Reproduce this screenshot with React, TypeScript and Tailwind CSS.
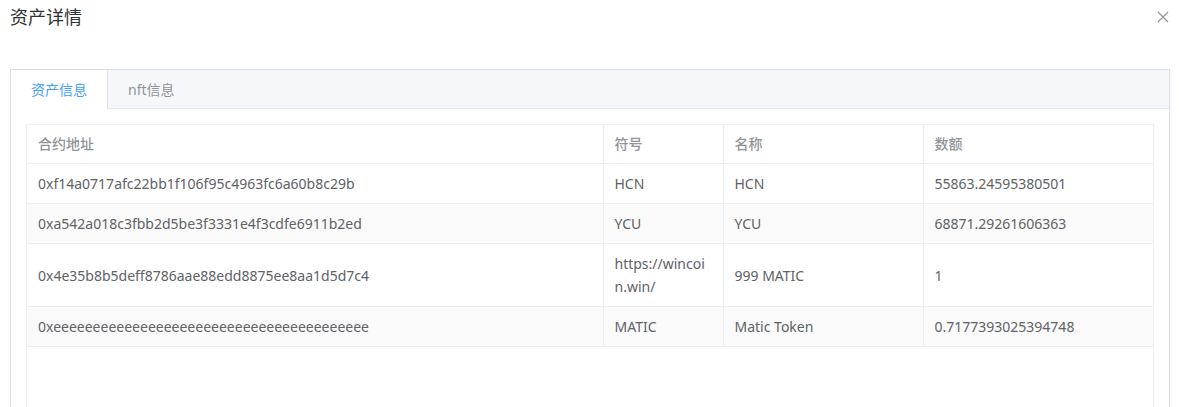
import { useState } from "react";

const rows = [
  {
    address: "0xf14a0717afc22bb1f106f95c4963fc6a60b8c29b",
    symbol: "HCN",
    name: "HCN",
    amount: "55863.24595380501",
  },
  {
    address: "0xa542a018c3fbb2d5be3f3331e4f3cdfe6911b2ed",
    symbol: "YCU",
    name: "YCU",
    amount: "68871.29261606363",
  },
  {
    address: "0x4e35b8b5deff8786aae88edd8875ee8aa1d5d7c4",
    symbol: "https://wincoin.win/",
    name: "999 MATIC",
    amount: "1",
  },
  {
    address: "0xeeeeeeeeeeeeeeeeeeeeeeeeeeeeeeeeeeeeeeee",
    symbol: "MATIC",
    name: "Matic Token",
    amount: "0.7177393025394748",
  },
];

const cols = [
  { key: "address", label: "合约地址", width: "w-[576px]" },
  { key: "symbol", label: "符号", width: "w-[120px]" },
  { key: "name", label: "名称", width: "w-[200px]" },
  { key: "amount", label: "数额", width: "w-[230px]" },
];

const CloseIcon = () => (
  <svg width="12" height="12" viewBox="0 0 12 12" fill="none">
    <path d="M1 1L11 11M11 1L1 11" stroke="#909399" strokeWidth="1.1" />
  </svg>
);

const AssetTable = () => (
  <div className="h-[300px] border border-[#ebeef5] bg-white">
    <table className="table-fixed border-collapse w-[1126px]">
      <colgroup>
        {cols.map((c) => (
          <col key={c.key} className={c.width} />
        ))}
      </colgroup>
      <thead>
        <tr>
          {cols.map((c, i) => (
            <th
              key={c.key}
              className={`text-left font-medium text-[#909399] text-[14px] leading-[23px] pt-[7px] pb-2 px-[11px] border-b border-[#ebeef5] ${
                i < cols.length - 1 ? "border-r" : ""
              }`}
            >
              {c.label}
            </th>
          ))}
        </tr>
      </thead>
      <tbody>
        {rows.map((row: any, r) => (
          <tr key={row.address} className={r % 2 === 1 ? "bg-[#fafafa]" : "bg-white"}>
            {cols.map((c, i) => (
              <td
                key={c.key}
                className={`text-[#606266] text-[14px] leading-[23px] py-2 px-[11px] break-all border-b border-[#ebeef5] ${
                  i < cols.length - 1 ? "border-r" : ""
                }`}
              >
                {row[c.key]}
              </td>
            ))}
          </tr>
        ))}
      </tbody>
    </table>
  </div>
);

export default function App() {
  const [tab, setTab] = useState(0);
  const tabs = ["资产信息", "nft信息"];

  return (
    <div
      className="w-[1179px] h-[407px] overflow-hidden bg-white"
      style={{ fontFamily: '"Noto Sans", "Noto Sans CJK SC", sans-serif' }}
    >
      <div className="flex justify-between items-start h-[69px] pl-[10px] pr-[10px] pt-[5px]">
        <h2 className="text-[18px] leading-[24px] text-[#303133] font-normal">资产详情</h2>
        <button className="mt-[6px] p-0">
          <CloseIcon />
        </button>
      </div>

      <div className="ml-[10px] w-[1160px] border border-[#dcdfe6] bg-white shadow-[0_2px_4px_0_rgba(0,0,0,0.06)]">
        <div className="flex h-[39px] bg-[#f5f7fa] border-b border-[#e4e7ed]">
          {tabs.map((t, i) => (
            <div
              key={t}
              onClick={() => setTab(i)}
              className={`px-5 h-[39px] flex items-center text-[14px] cursor-pointer ${
                tab === i
                  ? "bg-white text-[#409eff] border-r border-[#dcdfe6]"
                  : "text-[#909399]"
              }`}
            >
              {t}
            </div>
          ))}
        </div>
        <div className="p-[15px]">
          <AssetTable />
        </div>
      </div>
    </div>
  );
}
